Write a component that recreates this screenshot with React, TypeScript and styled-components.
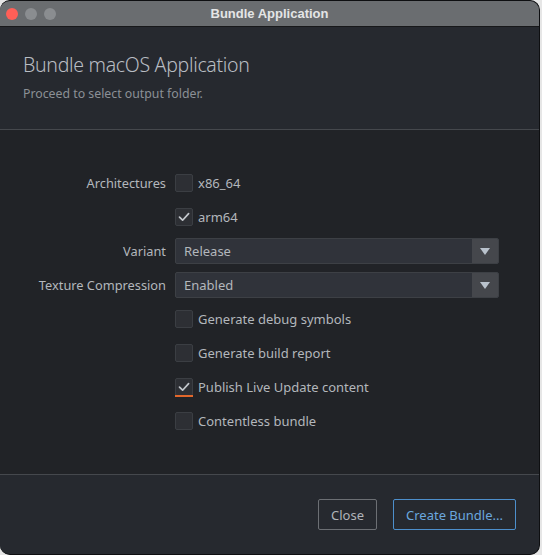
import React from "react";
import styled, { createGlobalStyle } from "styled-components";

const Global = createGlobalStyle`
  html, body { margin: 0; padding: 0; background: #e6e6e6; }
  body { font-family: "Noto Sans", "Open Sans", sans-serif; overflow: hidden; }
  * { box-sizing: border-box; }
`;

const Window = styled.div`
  width: 540px;
  height: 555px;
  display: flex;
  flex-direction: column;
  border-radius: 10px;
  overflow: hidden;
  border: 1px solid #0e0f11;
  border-left: none;
  background: #212327;
`;

const TitleBar = styled.div`
  height: 26px;
  flex: none;
  display: flex;
  align-items: center;
  position: relative;
  background: #6a6d70;
  border-bottom: 1px solid #17181a;
`;

const Lights = styled.div`
  display: flex;
  gap: 7px;
  padding-left: 6px;
`;

const Light = styled.span<{ $c: string }>`
  width: 12px;
  height: 12px;
  border-radius: 50%;
  background: ${(p) => p.$c};
`;

const WinTitle = styled.div`
  position: absolute;
  left: 0;
  right: 0;
  text-align: center;
  font-family: "Liberation Sans", "Inter", sans-serif;
  font-weight: 700;
  font-size: 13px;
  color: #e4e5e6;
`;

const Header = styled.div`
  flex: none;
  height: 103px;
  padding: 25px 23px 0;
  background: #26292f;
  border-bottom: 1px solid #45484d;
`;

const Heading = styled.div`
  font-size: 19.5px;
  font-weight: 300;
  color: #b9bdc3;
  line-height: 26px;
  letter-spacing: -0.3px;
`;

const Sub = styled.div`
  margin-top: 7px;
  font-size: 12.3px;
  color: #8b9096;
  line-height: 18px;
`;

const Body = styled.div`
  flex: 1;
  padding: 40px 40px 0 0;
  background: #212327;
`;

const Form = styled.div`
  display: grid;
  grid-template-columns: 166px 1fr;
  column-gap: 9px;
  grid-auto-rows: 26px;
  row-gap: 8px;
`;

const Label = styled.div`
  display: flex;
  align-items: center;
  justify-content: flex-end;
  font-size: 12.8px;
  color: #b3b7bc;
  white-space: nowrap;
`;

const CheckRow = styled.label`
  display: flex;
  align-items: center;
  gap: 5px;
  font-size: 13px;
  color: #b3b7bc;
`;

const Box = styled.span<{ $focus?: boolean }>`
  width: 18px;
  height: 18px;
  border-radius: 2px;
  background: #2d2f34;
  border: 1px solid #3b3e43;
  display: flex;
  align-items: center;
  justify-content: center;
  position: relative;
  ${(p) =>
    p.$focus
      ? `&::after { content: ""; position: absolute; left: -1px; right: -1px; bottom: -2px; height: 2px; background: #e2672b; }`
      : ""}
`;

const Select = styled.div`
  display: flex;
  align-items: stretch;
  height: 26px;
  border: 1px solid #3d4045;
  border-radius: 2px;
  background: #30333a;
  overflow: hidden;
`;

const SelectText = styled.div`
  flex: 1;
  display: flex;
  align-items: center;
  padding-left: 8px;
  font-size: 13px;
  color: #b3b7bc;
`;

const Arrow = styled.div`
  width: 26px;
  display: flex;
  align-items: center;
  justify-content: center;
  background: #45474c;
`;

const Footer = styled.div`
  flex: none;
  height: 80px;
  display: flex;
  justify-content: flex-end;
  align-items: flex-start;
  gap: 16px;
  padding: 24px 23px 0 0;
  background: #26292f;
  border-top: 1px solid #45484d;
`;

const Button = styled.button<{ $primary?: boolean }>`
  height: 31px;
  padding: 0 12px;
  background: transparent;
  border-radius: 2px;
  border: 1px solid ${(p) => (p.$primary ? "#4d8fcc" : "#6c6f74")};
  color: ${(p) => (p.$primary ? "#6ba7de" : "#b0b4b9")};
  font-family: "Noto Sans", sans-serif;
  font-size: 13px;
`;

const Check = () => (
  <svg width="14" height="14" viewBox="0 0 14 14">
    <path d="M2.5 7.2 L5.6 10.2 L11.6 3.6" fill="none" stroke="#c3c7cc" strokeWidth="1.7" strokeLinecap="round" strokeLinejoin="round" />
  </svg>
);

const Tri = () => (
  <svg width="10" height="7" viewBox="0 0 10 7">
    <path d="M0 0 H10 L5 7 Z" fill="#b9c2cc" />
  </svg>
);

const CB = ({ label, checked, focus }: { label: string; checked?: boolean; focus?: boolean }) => (
  <CheckRow>
    <Box $focus={focus}>{checked && <Check />}</Box>
    {label}
  </CheckRow>
);

export default function App() {
  return (
    <>
      <Global />
      <Window>
        <TitleBar>
          <Lights>
            <Light $c="#fe5f57" />
            <Light $c="#8a8d90" />
            <Light $c="#8a8d90" />
          </Lights>
          <WinTitle>Bundle Application</WinTitle>
        </TitleBar>
        <Header>
          <Heading>Bundle macOS Application</Heading>
          <Sub>Proceed to select output folder.</Sub>
        </Header>
        <Body>
          <Form>
            <Label>Architectures</Label>
            <CB label="x86_64" />
            <div />
            <CB label="arm64" checked />
            <Label>Variant</Label>
            <Select>
              <SelectText>Release</SelectText>
              <Arrow><Tri /></Arrow>
            </Select>
            <Label>Texture Compression</Label>
            <Select>
              <SelectText>Enabled</SelectText>
              <Arrow><Tri /></Arrow>
            </Select>
            <div />
            <CB label="Generate debug symbols" />
            <div />
            <CB label="Generate build report" />
            <div />
            <CB label="Publish Live Update content" checked focus />
            <div />
            <CB label="Contentless bundle" />
          </Form>
        </Body>
        <Footer>
          <Button>Close</Button>
          <Button $primary>Create Bundle...</Button>
        </Footer>
      </Window>
    </>
  );
}
